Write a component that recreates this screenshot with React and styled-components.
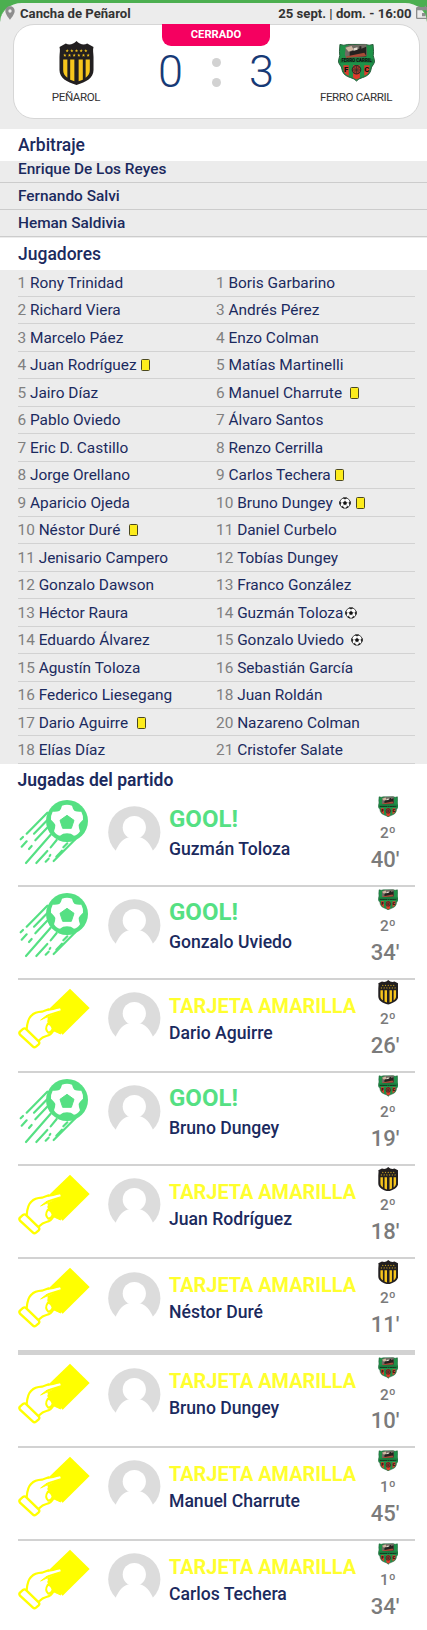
import React from 'react'
import styled, { createGlobalStyle } from 'styled-components'
import { MdLocationOn, MdEvent } from 'react-icons/md'

const referees = ['Enrique De Los Reyes', 'Fernando Salvi', 'Heman Saldivia']

// [number, name, marks, gap before the marks]
const players = [
    [[1, 'Rony Trinidad'], [1, 'Boris Garbarino']],
    [[2, 'Richard Viera'], [3, 'Andrés Pérez']],
    [[3, 'Marcelo Páez'], [4, 'Enzo Colman']],
    [[4, 'Juan Rodríguez', ['card'], 4], [5, 'Matías Martinelli']],
    [[5, 'Jairo Díaz'], [6, 'Manuel Charrute', ['card'], 8]],
    [[6, 'Pablo Oviedo'], [7, 'Álvaro Santos']],
    [[7, 'Eric D. Castillo'], [8, 'Renzo Cerrilla']],
    [[8, 'Jorge Orellano'], [9, 'Carlos Techera', ['card'], 4]],
    [[9, 'Aparicio Ojeda'], [10, 'Bruno Dungey', ['goal', 'card'], 6]],
    [[10, 'Néstor Duré', ['card'], 9], [11, 'Daniel Curbelo']],
    [[11, 'Jenisario Campero'], [12, 'Tobías Dungey']],
    [[12, 'Gonzalo Dawson'], [13, 'Franco González']],
    [[13, 'Héctor Raura'], [14, 'Guzmán Toloza', ['goal'], 2]],
    [[14, 'Eduardo Álvarez'], [15, 'Gonzalo Uviedo', ['goal'], 7]],
    [[15, 'Agustín Toloza'], [16, 'Sebastián García']],
    [[16, 'Federico Liesegang'], [18, 'Juan Roldán']],
    [[17, 'Dario Aguirre', ['card'], 9], [20, 'Nazareno Colman']],
    [[18, 'Elías Díaz'], [21, 'Cristofer Salate']],
]

const plays = [
    { type: 'goal', name: 'Guzmán Toloza', team: 'ferro', half: '2º', minute: "40'" },
    { type: 'goal', name: 'Gonzalo Uviedo', team: 'ferro', half: '2º', minute: "34'" },
    { type: 'card', name: 'Dario Aguirre', team: 'penarol', half: '2º', minute: "26'" },
    { type: 'goal', name: 'Bruno Dungey', team: 'ferro', half: '2º', minute: "19'" },
    { type: 'card', name: 'Juan Rodríguez', team: 'penarol', half: '2º', minute: "18'" },
    { type: 'card', name: 'Néstor Duré', team: 'penarol', half: '2º', minute: "11'" },
    { type: 'card', name: 'Bruno Dungey', team: 'ferro', half: '2º', minute: "10'", divider: true },
    { type: 'card', name: 'Manuel Charrute', team: 'ferro', half: '1º', minute: "45'" },
    { type: 'card', name: 'Carlos Techera', team: 'ferro', half: '1º', minute: "34'" },
]

const STAR = 'M5 0l1.2 3.4h3.6L6.9 5.5 8 9 5 6.9 2 9l1.1-3.5L.2 3.4h3.6z'

function PenarolCrest({ width, height }) {
    return (
        <svg width={width} height={height} viewBox="0 0 36 44" preserveAspectRatio="none">
            <path d="M18 0C21 3 25 4.500 29 2.600L35.500 6C34.500 9 35.500 12 35.500 16V29C35.500 37 28 41 18 44C8 41 .5 37 .5 29V16C.5 12 1.500 9 .5 6L7 2.600C11 4.500 15 3 18 0Z" fill="#221f20" />
            <path d="M4.300 18.500H8.600V36.700C5.500 34.500 4.300 32 4.300 29ZM11.500 18.500H15.800V40.300L11.500 38.700ZM20.200 18.500H24.500V38.700L20.200 40.300ZM27.400 18.500H31.700V29C31.700 32 30.500 34.500 27.400 36.700Z" fill="#f6c51c" />
            {[4.2, 9, 13.8, 18.6, 23.4, 28.2].map(x => (
                <path key={x} d={STAR} transform={`translate(${x} 12.500) scale(.36)`} fill="#f6c51c" />
            ))}
            {[6.6, 11.4, 16.2, 21, 25.8].map(x => (
                <path key={x} d={STAR} transform={`translate(${x} 8) scale(.36)`} fill="#f6c51c" />
            ))}
        </svg>
    )
}

function FerroCrest({ width, height }) {
    return (
        <svg width={width} height={height} viewBox="0 0 38 40" preserveAspectRatio="none">
            <path d="M2 1.500Q6 3.200 10 1.500H28Q32 3.200 36 1.500L36.500 9Q35.500 13 37.300 17.500Q38 20 36.500 22Q34 24.500 33.500 29Q32 34 25 36Q21 37 19 39.500Q17 37 13 36Q6 34 4.500 29Q4 24.500 1.500 22Q0 20 .7 17.500Q2.500 13 1.500 9Z" fill="#1e9248" stroke="#245a38" strokeWidth="1" />
            <path d="M5.500 23H11V34Q7 32.500 6 29ZM15.500 23H22.500V36L19 38L15.500 36ZM27 23H32.500L32 29Q31 32.500 27 34Z" fill="#e03a2c" />
            <path d="M8 4Q12 1 17 2L29 1L30 13L25 15H8L7 12Z" fill="#6f6a62" />
            <path d="M7.500 5L14 3L16 7L11 9Z" fill="#cfb6a0" />
            <path d="M12 9L22 6V3.500H24V6L29 4V14H12Z" fill="#25211f" />
            <path d="M8 14L27 10L29 13.500L9 15.500Z" fill="#a94a36" />
            <path d="M16 5.500L20 4.500V7L16 8Z" fill="#e4dcd0" />
            <path d="M2 16.500Q19 13.500 36 16.500V21Q19 18.800 2 21Z" fill="#1a7a3d" />
            <text x="19" y="20.200" textAnchor="middle" fontFamily="Roboto, sans-serif" fontWeight="900" fontSize="4.600" textLength="31" fill="#111">FERRO CARRIL</text>
            <circle cx="19" cy="27.800" r="4.400" fill="#a53a2c" stroke="#222" strokeWidth="1" />
            <path d="M16 25L22 31M22 25L16 31M19 23.500V32M14.800 28H23.200" stroke="#2f2b28" strokeWidth=".7" />
            <text x="8.300" y="29.800" textAnchor="middle" fontFamily="Roboto, sans-serif" fontWeight="900" fontSize="8" fill="#111">F</text>
            <text x="29.500" y="29.800" textAnchor="middle" fontFamily="Roboto, sans-serif" fontWeight="900" fontSize="8" fill="#111">C</text>
        </svg>
    )
}

function Crest({ team, ...size }) {
    return team === 'ferro' ? <FerroCrest {...size} /> : <PenarolCrest {...size} />
}

function GoalIcon() {
    return (
        <svg width="72" height="68" viewBox="24 24 216 204">
            <g stroke="#55e083" strokeWidth="6.500" strokeLinecap="round" fill="none">
                <path d="M112 68L50 131M39 141L32 148" />
                <path d="M110 92L72 131M50 154L35 170" />
                <path d="M113 112L76 151M65 168L57 177" />
                <path d="M122 134L48 219" />
                <path d="M140 150L122 172M112 183L79 219" />
                <path d="M121 195L119 198M116 206L107 215" />
                <path d="M156 182L139 200M172 160L160 172" />
                <path d="M196 148L131 213" />
            </g>
            <circle cx="171" cy="93" r="63" fill="#55e083" />
            <path d="M156 47Q171 41 186 47Q189 60 194 63Q202 66 214 65Q220 76 219 89Q207 100 206 105Q206 115 210 124Q203 136 192 137Q184 130 171 130Q158 130 150 137Q139 136 132 124Q136 115 136 105Q135 100 123 89Q122 76 128 65Q140 66 148 63Q153 60 156 47Z" fill="#fff" />
            <path d="M171 76L192 91L184 115H158L150 91Z" fill="#55e083" strokeLinejoin="round" stroke="#55e083" strokeWidth="3" />
        </svg>
    )
}

function CardIcon() {
    return (
        <svg width="76" height="64" viewBox="6 6 228 192">
            <path d="M168 14L227 72L146 152L96 98L98 82Z" fill="#ff0" />
            <path d="M38 136Q40 106 52 95Q62 84 84 83L118 78Q139 70 141 76Q142 81 126 87L101 100Q92 108 102 114Q120 126 119 136Q116 150 97 156Q86 158 74 170Z" fill="#fff" />
            <path d="M38 136Q40 106 52 95Q62 84 84 83L104 76M118 140Q112 153 97 156Q86 158 74 170" fill="none" stroke="#ff0" strokeWidth="6.500" strokeLinecap="round" />
            <path d="M80 108L101 92L139 76Q142 80 127 88L106 100Q98 108 104 122L118 140L140 150L146 110L118 90Z" fill="#ff0" stroke="#ff0" strokeWidth="3" strokeLinejoin="round" />
            <path d="M101 120Q111 118 116 134Q112 146 103 146Q91 136 101 120Z" fill="#fff" stroke="#ff0" strokeWidth="6" />
            <path d="M96 90L108 86L137 77" fill="none" stroke="#fff" strokeWidth="5" strokeLinecap="round" />
            <path d="M18 143L27 135Q32 131 37 136L74 172Q78 177 74 181L66 188Q61 192 57 188L18 152Q14 147 18 143Z" fill="#fff" stroke="#ff0" strokeWidth="7" />
        </svg>
    )
}

function AvatarIcon() {
    return (
        <svg width="53" height="45" viewBox="0 0 53 45">
            <circle cx="26.300" cy="26.300" r="26.100" fill="#dcdcdc" />
            <circle cx="26.300" cy="21.500" r="11.600" fill="#fff" />
            <path d="M7.500 45C11 37.500 14.500 33 20 31.500H32.600C38 33 41.600 37.500 45.100 45Z" fill="#fff" />
        </svg>
    )
}

function SmallBall() {
    return (
        <svg width="12" height="12" viewBox="0 0 24 24">
            <circle cx="12" cy="12" r="10.500" fill="#fff" stroke="#222" strokeWidth="1.600" />
            <path d="M12 8.400L15.600 11L14.200 15.200H9.800L8.400 11ZM8.500 1.800L12 4L15.500 1.800ZM22.500 9L20 11.500L21.500 15.500L22.800 13ZM1.500 9L4 11.500L2.500 15.500L1.200 13ZM5.500 19.800L7.500 18.400L9.500 22ZM18.500 19.800L16.500 18.400L14.500 22Z" fill="#111" stroke="#111" />
            <path d="M12 4V8M19.500 12L16 10.700M4.500 12L8 10.700M7.300 18L9.300 15.500M16.700 18L14.700 15.500" stroke="#777" strokeWidth=".8" />
        </svg>
    )
}

function Player({ data }) {
    const [number, name, marks = [], gap = 0] = data
    return (
        <PlayerCell>
            <Number>{number}</Number>
            <span>{name}</span>
            {marks.length > 0 && (
                <Marks $gap={gap}>
                    {marks.map(mark => mark === 'card' ? <SmallCard key={mark} /> : <SmallBall key={mark} />)}
                </Marks>
            )}
        </PlayerCell>
    )
}

export default function App() {
    return (
        <>
            <GlobalStyle />
            <Page>
                <Scoreboard>
                    <TopBar>
                        <Place><MdLocationOn />Cancha de Peñarol</Place>
                        <When>25 sept. | dom. - 16:00<MdEvent /></When>
                    </TopBar>
                    <ScoreCard>
                        <Team>
                            <CrestBox><PenarolCrest width={35} height={44} /></CrestBox>
                            <TeamName>PEÑAROL</TeamName>
                        </Team>
                        <Middle>
                            <Status>CERRADO</Status>
                            <Score>
                                <span>0</span>
                                <Colon><i /><i /></Colon>
                                <span>3</span>
                            </Score>
                        </Middle>
                        <Team>
                            <CrestBox><FerroCrest width={37} height={38.5} /></CrestBox>
                            <TeamName>FERRO CARRIL</TeamName>
                        </Team>
                    </ScoreCard>
                </Scoreboard>

                <SectionTitle>Arbitraje</SectionTitle>
                <Referees>
                    {referees.map(name => <Referee key={name}>{name}</Referee>)}
                </Referees>

                <SectionTitle>Jugadores</SectionTitle>
                <Players>
                    {players.map(([home, away], index) => (
                        <PlayerRow key={index}>
                            <Player data={home} />
                            <Player data={away} />
                        </PlayerRow>
                    ))}
                </Players>

                <PlaysTitle>Jugadas del partido</PlaysTitle>
                <Plays>
                    {plays.map((play, index) => (
                        <Play key={index} $divider={play.divider}>
                            <PlayIcon $type={play.type}>
                                {play.type === 'goal' ? <GoalIcon /> : <CardIcon />}
                            </PlayIcon>
                            <Avatar><AvatarIcon /></Avatar>
                            <PlayText $type={play.type}>
                                <PlayTitle $type={play.type}>
                                    {play.type === 'goal' ? 'GOOL!' : 'TARJETA AMARILLA'}
                                </PlayTitle>
                                <PlayName>{play.name}</PlayName>
                            </PlayText>
                            <PlaySide>
                                <SideCrest>
                                    <Crest team={play.team} width={20.5} height={play.team === 'ferro' ? 21.5 : 24.5} />
                                </SideCrest>
                                <Half>{play.half}</Half>
                                <Minute>{play.minute}</Minute>
                            </PlaySide>
                        </Play>
                    ))}
                </Plays>
            </Page>
        </>
    )
}

const GlobalStyle = createGlobalStyle`
*{
    box-sizing:border-box;
}
body{
    margin:0;
    background:#fff;
    font-family:Roboto, "Liberation Sans", sans-serif;
}
svg{
    display:block;
    flex:none;
}
`

const Page = styled.div`
width:427px;
height:1630px;
overflow:hidden;
background:linear-gradient(#4caf50 0 24px, #fff 24px);
color:#1b2a5e;
`

const Scoreboard = styled.div`
height:129px;
border-top:3.500px solid #4caf50;
border-radius:22px 22px 0 0;
background:#ececec;
`

const TopBar = styled.div`
display:flex;
justify-content:space-between;
height:21px;
color:#333;
font-size:13.150px;
font-weight:700;
line-height:21px;
white-space:nowrap;
overflow:hidden;
svg{
    width:16px;
    height:16px;
    margin-top:2px;
    color:#8d8d8d;
}
`

const Place = styled.div`
display:flex;
padding-left:2px;
svg{
    margin-right:2px;
}
`

const When = styled.div`
display:flex;
margin-right:-3px;
svg{
    margin-left:2.500px;
}
`

const ScoreCard = styled.div`
display:grid;
grid-template-columns:98px 1fr 98px;
width:407px;
height:95px;
margin-left:12.500px;
padding:0 13.500px 0 13.500px;
border:1px solid #d6d6d6;
border-radius:21px;
background:#fff;
`

const Team = styled.div`
display:flex;
flex-direction:column;
align-items:center;
padding-top:15px;
`

const CrestBox = styled.div`
display:flex;
align-items:center;
height:45px;
`

const TeamName = styled.div`
margin-top:4px;
color:#333;
font-size:11.600px;
letter-spacing:-.4px;
line-height:16px;
white-space:nowrap;
`

const Middle = styled.div`
display:flex;
flex-direction:column;
align-items:center;
`

const Status = styled.div`
width:108px;
height:22px;
margin-top:-1px;
border-radius:0 0 9px 9px;
background:#f50060;
color:#fff;
font-size:11.200px;
font-weight:700;
line-height:21px;
text-align:center;
`

const Score = styled.div`
display:flex;
align-items:center;
justify-content:space-between;
width:116px;
height:52px;
color:#173a76;
font-size:45px;
font-weight:300;
line-height:52px;
`

const Colon = styled.div`
display:grid;
gap:11px;
i{
    width:9px;
    height:9px;
    border-radius:50%;
    background:#d2d2d2;
}
`

const SectionTitle = styled.h2`
height:32px;
margin:0;
padding-left:18px;
background:#fff;
font-size:17.500px;
font-weight:500;
line-height:33px;
`

const Referees = styled.div`
height:76.500px;
background:#ececec;
`

const Referee = styled.div`
height:27.400px;
padding-left:18px;
border-bottom:1px solid #ccc;
font-size:15.400px;
font-weight:500;
line-height:27.600px;
&:first-child{
    height:21.600px;
    line-height:16px;
}
`

const Players = styled.div`
height:494.500px;
padding:0 12.500px 0 17.500px;
background:#ececec;
`

const PlayerRow = styled.div`
display:grid;
grid-template-columns:198.500px 1fr;
height:27.470px;
border-bottom:1px solid #d2d2d2;
`

const PlayerCell = styled.div`
display:flex;
align-items:center;
padding-top:.5px;
font-size:15.420px;
line-height:26px;
white-space:nowrap;
`

const Number = styled.span`
margin-right:3.800px;
color:#808080;
`

const Marks = styled.div`
display:flex;
align-items:center;
gap:5px;
margin-left:${({ $gap }) => $gap}px;
`

const SmallCard = styled.i`
width:9px;
height:12px;
border:1px solid #4a4720;
border-radius:1.500px;
background:#fdec1c;
`

const PlaysTitle = styled.h2`
height:29.500px;
margin:0;
padding-left:17.500px;
font-size:17.500px;
font-weight:600;
line-height:32.500px;
`

const Plays = styled.div`
padding:0 12.500px 0 17.500px;
`

const Play = styled.div`
display:grid;
grid-template-columns:90.500px 61px 1fr 53px;
height:${({ $divider }) => $divider ? '95.600px' : '93.100px'};
border-top:${({ $divider }) => $divider ? '3px solid #d2d2d2' : 'none'};
border-bottom:2px solid #d2d2d2;
`

const PlayIcon = styled.div`
margin-left:${({ $type }) => $type === 'goal' ? '.5px' : '-1.500px'};
padding-top:${({ $type }) => $type === 'goal' ? '4.600px' : '6.400px'};
`

const Avatar = styled.div`
padding-top:12.600px;
`

const PlayText = styled.div`
padding-top:${({ $type }) => $type === 'goal' ? '12.500px' : '13.400px'};
white-space:nowrap;
`

const PlayTitle = styled.div`
color:${({ $type }) => $type === 'goal' ? '#55e083' : '#ffff2e'};
font-size:${({ $type }) => $type === 'goal' ? '24px' : '19.850px'};
font-weight:700;
line-height:${({ $type }) => $type === 'goal' ? '27px' : '28px'};
margin-bottom:${({ $type }) => $type === 'goal' ? '4px' : '0'};
`

const PlayName = styled.div`
font-size:17.600px;
font-weight:500;
line-height:24px;
`

const PlaySide = styled.div`
display:flex;
flex-direction:column;
align-items:center;
color:#7b7b7b;
`

const SideCrest = styled.div`
display:flex;
align-items:center;
height:26px;
`

const Half = styled.div`
margin-top:4.500px;
font-size:15.400px;
font-weight:500;
line-height:18px;
`

const Minute = styled.div`
margin-top:3.800px;
margin-right:6px;
font-size:22px;
font-weight:500;
line-height:28px;
`
